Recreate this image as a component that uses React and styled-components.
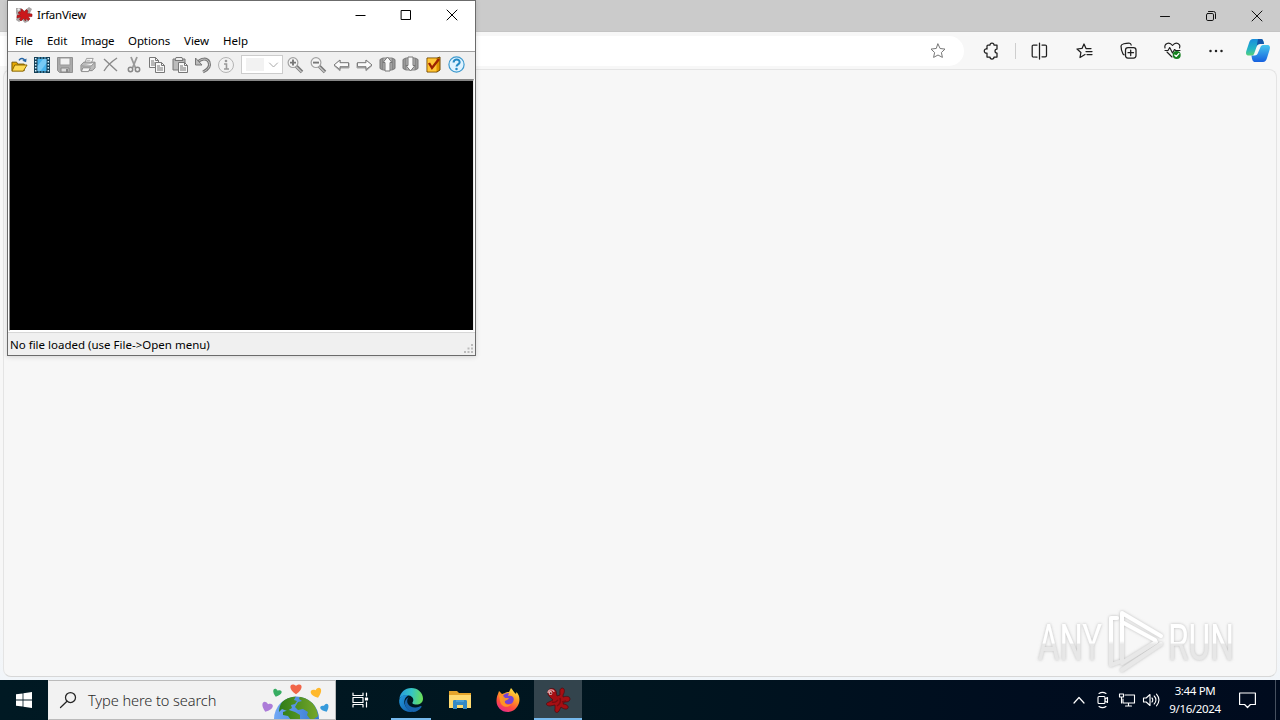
import React from "react";
import styled, { createGlobalStyle } from "styled-components";

const Global = createGlobalStyle`
  * { box-sizing: border-box; }
  body { margin: 0; overflow: hidden; font-family: "Noto Sans", "Open Sans", sans-serif; }
  svg { display: block; flex: none; overflow: visible; }
`;

const Desktop = styled.div`
  position: relative;
  width: 1280px;
  height: 720px;
  overflow: hidden;
  display: flex;
  flex-direction: column;
  background: #f7f7f7;
`;

/* ---------- browser ---------- */
const Browser = styled.div`
  flex: 1;
  min-height: 0;
  display: flex;
  flex-direction: column;
  padding-bottom: 3px;
  background: linear-gradient(#f7f7f7 90%, #f1f5f9);
`;
const BrowserTitle = styled.div`
  height: 32px;
  display: flex;
  justify-content: flex-end;
  background: #cbcbcb;
  border-bottom: 1px solid #c4c4c4;
`;
const CaptionButton = styled.div`
  width: 46px;
  display: flex;
  align-items: center;
  justify-content: center;
`;
const BrowserToolbar = styled.div`
  height: 37px;
  display: flex;
  align-items: center;
  background: #f7f7f7;
`;
const AddressBar = styled.div`
  width: 964px;
  height: 30px;
  margin-top: 1px;
  padding-right: 18px;
  display: flex;
  align-items: center;
  justify-content: flex-end;
  border-radius: 0 15px 15px 0;
  background: #fff;
`;
const ToolSlot = styled.div`
  width: ${(p) => p.$w}px;
  margin-left: ${(p) => p.$gap || 0}px;
  display: flex;
  justify-content: center;
`;
const Separator = styled.div`
  width: 1px;
  height: 16px;
  margin-left: 15px;
  background: #cecece;
`;
const PageCard = styled.div`
  flex: 1;
  margin: 0 3px;
  padding: 0 40px 1px 0;
  display: flex;
  justify-content: flex-end;
  align-items: flex-end;
  border: 1px solid #e4e4e4;
  border-bottom-color: #d7d7d7;
  border-radius: 8px;
  background: #f7f7f7;
`;

/* ---------- image viewer window ---------- */
const Window = styled.div`
  position: absolute;
  left: 7px;
  top: 0;
  width: 469px;
  height: 356px;
  display: flex;
  flex-direction: column;
  border: 1px solid #6b6b6b;
  background: #fff;
  color: #000;
  box-shadow: 0 1px 5px rgba(0, 0, 0, 0.14);
`;
const WindowTitle = styled.div`
  height: 29px;
  display: flex;
  align-items: center;
  padding: 0 0 1px 8px;
`;
const WindowName = styled.div`
  flex: 1;
  margin-left: 5px;
  font-size: 11.5px;
  line-height: 16px;
  letter-spacing: -0.25px;
`;
const MenuBar = styled.div`
  height: 21px;
  padding: 3px 0 0 7px;
  display: flex;
  font-size: 11.5px;
  line-height: 16px;
`;
const MenuItem = styled.div`
  width: ${(p) => p.$w}px;
  white-space: nowrap;
  letter-spacing: ${(p) => p.$track || 0}px;
`;
const IconBar = styled.div`
  height: 28px;
  display: flex;
  align-items: center;
  padding-bottom: 2px;
  border-top: 1px solid #a0a0a0;
  background: #f0f0f0;
`;
const IconCell = styled.div`
  width: 23px;
  padding-right: 1px;
  display: flex;
  justify-content: center;
`;
const Combo = styled.div`
  width: 42px;
  height: 19px;
  margin: 0 1px 0 3px;
  padding: 0 4px;
  display: flex;
  align-items: center;
  justify-content: space-between;
  border: 1px solid #ccc;
  background: #fff;
`;
const ComboValue = styled.div`
  width: 18px;
  height: 13px;
  background: #f2f2f2;
`;
const Canvas = styled.div`
  height: 252px;
  margin: 0 1px;
  border: 1px solid #868686;
  border-top-width: 2px;
  border-right-color: #e8e8e8;
  border-bottom-color: #fff;
  background: #000;
`;
const StatusBar = styled.div`
  flex: 1;
  margin-top: 1px;
  padding: 2px 1px 0 2px;
  display: flex;
  justify-content: space-between;
  align-items: flex-start;
  border-top: 1px solid #d7d7d7;
  background: #f0f0f0;
  font-size: 11.5px;
  line-height: 19px;
`;
const Grip = styled.div`
  align-self: flex-end;
  padding: 0 1px 2px 0;
`;

/* ---------- taskbar ---------- */
const Taskbar = styled.div`
  height: 40px;
  display: flex;
  background: linear-gradient(90deg, #001923, #00151f 50%, #000d1f 80%, #000b1e);
`;
const TaskButton = styled.div`
  width: ${(p) => p.$w || 49}px;
  height: 40px;
  display: flex;
  align-items: center;
  justify-content: center;
  background: ${(p) => (p.$active ? "#33444d" : "transparent")};
  box-shadow: ${(p) => (p.$active ? "inset 0 -2px #76b9ed" : "none")};
`;
const RunningTask = styled.div`
  width: 40px;
  height: 40px;
  display: flex;
  align-items: center;
  justify-content: center;
  border-bottom: 2px solid #76b9ed;
  padding-top: 2px;
`;
const SearchBox = styled.div`
  width: 288px;
  height: 40px;
  padding: 0 5px 0 11px;
  display: flex;
  align-items: center;
  border: 1px solid #bbb;
  border-left-color: #eee;
  background: #f2f2f2;
  color: #2b2b2b;
`;
const SearchText = styled.div`
  flex: 1;
  margin-left: 12px;
  font-size: 14.6px;
  letter-spacing: -0.1px;
  font-weight: 300;
  white-space: nowrap;
`;
const Tray = styled.div`
  margin-left: auto;
  display: flex;
  align-items: center;
  color: #fff;
`;
const TrayIcon = styled.div`
  width: 24px;
  display: flex;
  justify-content: center;
`;
const Clock = styled.div`
  width: 64px;
  margin-right: 8px;
  text-align: center;
  font-size: 11.5px;
  line-height: 18px;
  letter-spacing: -0.35px;
  padding-bottom: 1px;
`;
const ShowDesktop = styled.div`
  width: 5px;
  height: 40px;
  margin-left: 16px;
  border-left: 1px solid #46505f;
`;

const Line = ({ w = 16, h = w, vb = `0 0 ${w} ${h}`, c = "#222", s = 1, children }) => (
  <svg width={w} height={h} viewBox={vb} fill="none" stroke={c} strokeWidth={s} strokeLinecap="round" strokeLinejoin="round">
    {children}
  </svg>
);

const starPath = "M8 1 10.1 5.5 15 6.1 11.4 9.5 12.4 14.4 8 12 3.6 14.4 4.6 9.5 1 6.1 5.9 5.5Z";

const Splat = () => (
  <svg width="16" height="16" viewBox="0 0 16 16">
    <path d="M0 1h5l3 3 5-4 3 2-2 4 1 2-3 2 1 4-4 2-3-3-3 2-3-2 1-4-1-3Z" fill="#a9a5a5" />
    <path d="M5 2 7 3 8 5 10.500 2.500 12 4 11 6.500 16 7v2.500l-4 .3 2 2.200-2 1.500-2-2L9.500 14 7.500 11.500 5 14 3.500 12.500 5 10 1 11V8.500l3.500-1L2 6l1.500-1.500L5 5Z" fill="#cc171b" stroke="#91191b" strokeWidth=".6" strokeLinejoin="round" />
    <circle cx="2.700" cy="2.500" r="1.200" fill="#eee" />
  </svg>
);

const ViewerTaskIcon = () => (
  <svg width="26" height="26" viewBox="0 0 26 26">
    <path d="M3 5c0-4 6-5 8-1l1 5 3-1c0-3-1-6 2-7 3 0 3 4 1 7v2c3-1 7-1 7 2s-4 3-6 3l-1 2c3 0 6 2 5 4s-5 1-7-1l-2 4c-2 3-5 1-4-2v-4l-5 1c-4 0-5-3-1-4l4-2c-2-2-6-5-5-8Z" fill="#a50e13" stroke="#500d11" strokeWidth=".8" />
    <path d="M15 11c1 3 0 6-3 8M7 15c2 1 4 0 6-2m4 2 4-1" stroke="#790b10" strokeWidth="1.400" fill="none" />
    <path d="M3 6c0-4 6-4 6-1" fill="none" stroke="#df9b9e" strokeWidth="1.300" />
    <circle cx="5.500" cy="6" r="1.900" fill="#e9c5c4" />
    <circle cx="5.700" cy="6.200" r="1" fill="#74171a" />
  </svg>
);

const Page = ({ x, y }) => (
  <g transform={`translate(${x} ${y})`}>
    <path d="M.5.5h6l3 3v7h-9Z" fill="#f8f8f8" stroke="#777" />
    <path d="M6.500.5v3h3M2 4h3M2 6h6M2 8h6" fill="none" stroke="#777" />
  </g>
);
const Lens = ({ plus }) => (
  <svg width="16" height="16" viewBox="0 0 16 16">
    <path d="m9 9 6 6" stroke="#777" strokeWidth="3.600" />
    <path d="m9 9.500 5.500 5.500" stroke="#c4c4c4" strokeWidth="1.400" />
    <circle cx="6" cy="5.600" r="4.900" fill="#f5f5f5" stroke="#a2a2a2" strokeWidth="1.200" />
    <path d={plus ? "M3 5.600h6M6 2.600v6" : "M3 5.600h6"} stroke="#777" strokeWidth="1.900" />
  </svg>
);
const Arrow = ({ flip }) => (
  <svg width="17" height="16" viewBox="0 0 17 16">
    <g transform={flip ? "matrix(-1 0 0 1 17 0)" : undefined} strokeLinejoin="round">
      <path d="M1 8.500 7 3v3h9v5H7v3Z" fill="#aaa" stroke="#a2a2a2" />
      <path d="M1 8 7 3v2.700h8.500v4H7v2.800Z" fill="#fafafa" stroke="#7b7b7b" />
    </g>
  </svg>
);
const PageArrow = ({ down }) => (
  <svg width="17" height="17" viewBox="0 0 17 17">
    <path d="M1 3.500 4 2v12l-3-1.500Zm15 0L13 2v12l3-1.500Z" fill="#999" stroke="#777" />
    <path d="M4 2h9v12H4Z" fill="#bbb" stroke="#888" />
    <path d="M8.500 1 13 6.500h-2V15H6V6.500H4Z" transform={down ? "rotate(180 8.500 8)" : undefined} fill="#fafafa" stroke="#777" strokeLinejoin="round" />
  </svg>
);

const viewerIcons = [
  <svg width="17" height="16" viewBox="0 0 18 16">
    <path d="M1 14V5h5l1 2h7v7Z" fill="#e8a900" stroke="#765700" />
    <path d="M1 14.500 4 8h13l-4 6.500Z" fill="#ffdb53" stroke="#896500" />
    <path d="M8.500 3c2-3 5-2 6 0" fill="none" stroke="#2463a3" strokeWidth="1.500" /><path d="m16.500 1-.5 4-4-1.500Z" fill="#2463a3" />
  </svg>,
  <svg width="16" height="16" viewBox="0 0 16 16">
    <rect width="16" height="16" fill="#143e56" /><rect x="3.500" y="2" width="9" height="12" fill="#48b4ed" />
    <path d="M3.500 9 9 2h3.500v4l-6 8h-3Z" fill="#90d4f8" opacity=".65" />
    <path d="M1.700 1v14M14.300 1v14" stroke="#d5f3ff" strokeWidth="1.500" strokeDasharray="1.5 1.5" />
    <path d="M4 1h9M4 15h9" stroke="#65b6dc" strokeDasharray="2 1" />
  </svg>,
  <svg width="16" height="16" viewBox="0 0 16 16"><path d="M.5.5h15v15h-13l-2-2Z" fill="#aaa" stroke="#929292" /><path d="M3 1h10v7H3z" fill="#f2f2f2" stroke="#999" /><path d="M4 11h8v4H4z" fill="#ddd" stroke="#888" /><path d="M9 12h2v3H9z" fill="#888" /></svg>,
  <svg width="16" height="16" viewBox="0 0 17 16"><path d="m5 6 2-5h7l-2 5" fill="#fff" stroke="#999" /><path d="m1 8 3-3h12v6l-3 3H1Z" fill="#bbb" stroke="#888" /><path d="M2 9h10l3-3M3 11h8l-2 4H1.500Z" fill="#f4f4f4" stroke="#888" /><path d="M7 3h4M6 5h4" stroke="#aaa" /></svg>,
  <svg width="16" height="16" viewBox="0 0 16 16"><path d="m1 2 13 12M14 1C8 5 4 9 1 14" fill="none" stroke="#8a8a8a" strokeWidth="1.400" /></svg>,
  <svg width="16" height="16" viewBox="0 0 16 16"><path d="m5 0 4.500 11M11 0 6.500 11" stroke="#999" strokeWidth="1.800" /><circle cx="4.500" cy="12.500" r="2.200" fill="#eee" stroke="#888" strokeWidth="1.500" /><circle cx="11.500" cy="12.500" r="2.200" fill="#eee" stroke="#888" strokeWidth="1.500" /></svg>,
  <svg width="16" height="16" viewBox="0 0 16 16"><Page x="0" y="0" /><Page x="6" y="5" /></svg>,
  <svg width="16" height="16" viewBox="0 0 16 16"><path d="M1 2h12v11H1Z" fill="#bbb" stroke="#777" /><path d="M4 .5h6l1 3H3Z" fill="#eee" stroke="#777" /><Page x="6" y="5" /></svg>,
  <svg width="16" height="16" viewBox="0 0 16 16"><path d="M2 6c4-5 10-5 12-1 2 5-2 8-6 10" fill="none" stroke="#777" strokeWidth="3" /><path d="M2 6c4-5 10-5 12-1 2 5-2 8-6 10" fill="none" stroke="#c4c4c4" /><path d="M.5 1v7H7Z" fill="#bbb" stroke="#777" /></svg>,
  <svg width="16" height="16" viewBox="0 0 16 16"><circle cx="8" cy="8" r="7.500" fill="#f2f2f2" stroke="#b4b4b4" /><circle cx="8" cy="4" r="1.300" fill="#999" /><path d="M6 7h2.500v5M6 12h5" fill="none" stroke="#999" strokeWidth="1.600" /></svg>,
];
const navIcons = [
  <Lens plus />, <Lens />, <Arrow />, <Arrow flip />, <PageArrow />, <PageArrow down />,
  <svg width="15" height="17" viewBox="0 0 15 17"><path d="M1 2h10l3-1v13l-3 2H1Z" fill="#df9300" stroke="#704800" /><path d="M1.500 2.500h9v13h-9Z" fill="#ffc637" /><path d="m3 7 3 5 7-9" fill="none" stroke="#9e2300" strokeWidth="2.400" /></svg>,
  <svg width="17" height="17" viewBox="0 0 17 17"><circle cx="8.500" cy="8.500" r="7.600" fill="#dff3ff" stroke="#3d99cd" strokeWidth="1.200" /><path d="M5.600 6.500c0-4 6.400-4 6 0-.2 2-3 2-3 4" fill="none" stroke="#248ac5" strokeWidth="2.100" /><circle cx="8.500" cy="13" r="1.250" fill="#248ac5" /></svg>,
];

const Watermark = () => (
  <svg width="200" height="66" viewBox="1036 608 200 66" fontFamily="Roboto, sans-serif">
    <defs>
      <linearGradient id="ink" x1="0" y1="0" x2="0" y2="1"><stop offset=".5" stopColor="#fff" /><stop offset=".52" stopColor="#e7e7e7" /></linearGradient>
      <linearGradient id="mark" gradientUnits="userSpaceOnUse" x1="0" y1="608" x2="0" y2="672"><stop offset=".5" stopColor="#fff" /><stop offset=".55" stopColor="#e8e8e8" /></linearGradient>
      <filter id="soft" x="-10%" y="-20%" width="120%" height="140%"><feDropShadow dx="0" dy="0" stdDeviation="1.4" floodColor="#999" floodOpacity=".65" /></filter>
    </defs>
    <g filter="url(#soft)">
      <text x="1038" y="659" fontSize="50" fill="url(#ink)" textLength="64" lengthAdjust="spacingAndGlyphs">ANY</text>
      <text x="1168" y="659" fontSize="50" fill="url(#ink)" textLength="66" lengthAdjust="spacingAndGlyphs">RUN</text>
      <g fill="none" stroke="url(#mark)" strokeWidth="4" strokeLinejoin="round" strokeLinecap="round">
        <path d="M1117 617h-6v47l8-3M1122 662v-50l39 23M1122 621l33 18M1122 662l34-21M1122 669l39-26" />
      </g>
    </g>
  </svg>
);

const heart = "M0 5C-9-1-5-7 0-3 5-7 9-1 0 5Z";
const Earth = () => (
  <svg width="70" height="38" viewBox="260 681 70 38">
    <defs>
      <linearGradient id="sea"><stop stopColor="#83b7ff" /><stop offset="1" stopColor="#286ec8" /></linearGradient>
      <linearGradient id="land"><stop stopColor="#2e7c17" /><stop offset="1" stopColor="#76a72b" /></linearGradient>
      <clipPath id="globe"><path d="M274 719a22.500 22.500 0 0 1 45 0Z" /></clipPath>
    </defs>
    <g clipPath="url(#globe)">
      <path d="M260 681h70v38h-70z" fill="url(#sea)" />
      <path d="M282 702c4-5 10-6 14-6l-2 4 3 1-2 3-4 1 1 3-5 3-5-2-3 3c0-4 1-7 3-10ZM300 696c10 1 17 10 18 20l-4 3h-4l-3-4 1-3-5-3-5 1-3-3 3-5 4-1-3-2ZM283 712l6-2 6 2 5 3v5h-9l-3-4-5-1Z" fill="url(#land)" />
    </g>
    <path d={heart} transform="translate(296 689) scale(1.050)" fill="#f16548" />
    <path d={heart} transform="translate(277 693) rotate(18) scale(.8)" fill="#37ad62" />
    <path d={heart} transform="translate(316.500 693) rotate(-18)" fill="#ffb92c" />
    <path d={heart} transform="translate(267 707) rotate(20)" fill="#ac7cd8" />
    <path d={heart} transform="translate(325 708) rotate(-25) scale(.8)" fill="#369adb" />
  </svg>
);

const Edge = () => (
  <svg width="24" height="24" viewBox="0 0 24 24">
    <defs>
      <linearGradient id="edgeTop" x1="0" y1=".4" x2="1" y2=".5"><stop stopColor="#279cde" /><stop offset=".5" stopColor="#35c5c5" /><stop offset="1" stopColor="#6be055" /></linearGradient>
      <linearGradient id="edgeLow" x1="0" y1="0" x2="1" y2="1"><stop stopColor="#229ade" /><stop offset="1" stopColor="#125ba9" /></linearGradient>
    </defs>
    <path d="M.4 11C1 4.500 6 0 12.300 0 19 0 24 5 24 10.500c0 4-3 6-6.500 6-4 0-4.700-1.500-3.600-2.800 1.300-2-.2-5.600-4-6.200C5.500 6.500 1.500 8.500.4 11Z" fill="url(#edgeTop)" />
    <path d="M.2 12C1 8 5 6 9.500 7.300c-4 2-5.500 7-2.800 11.200 1.800 2.900 4.300 4.500 7 5.300C6 25.200-.5 19.500.2 12Z" fill="url(#edgeLow)" />
    <path d="M9.700 9c-4 5 .5 11 7 10.500 2-.2 3.500-.8 5-1.500 1 0 1.200.5.5 1.500-2.500 3.500-6 4.900-9.600 4.300C5 21 3.500 12 9.700 9Z" fill="#1764ad" />
  </svg>
);
const Explorer = () => (
  <svg width="22" height="20" viewBox="0 0 22 20"><path d="M0 1h8l2 2h12v15H0Z" fill="#e5a52b" /><path d="M0 5h22v13H0Z" fill="#ffda70" /><path d="M4 11c0-1 1-1 2-1h10c1 0 2 0 2 1v8h-4v-4H8v4H4Z" fill="#3689c4" /><path d="M7 11h8" stroke="#62b6e8" /></svg>
);
const Firefox = () => (
  <svg width="24" height="24" viewBox="0 0 24 24">
    <defs><linearGradient id="fox" x1=".8" y1="0" x2=".3" y2="1"><stop stopColor="#ffe847" /><stop offset=".4" stopColor="#ff9a24" /><stop offset=".72" stopColor="#ff4b3e" /><stop offset="1" stopColor="#e52b8b" /></linearGradient></defs>
    <path d="M2 6 3 3l3 3 3-1c1-1 2-1 4-1l2-4c2 2 2.500 4 5 6l.5-2c3 3 3.500 7 2.500 11-1.500 5-6 9-11 9C5 24 .5 19 .5 13 .5 10 1 8 2 6Z" fill="url(#fox)" />
    <path d="M7 8c1-2 3-3 6-3l-1 3c5-1 7 2 5 6-2 3-6 3-9 0-2-2-2-4-1-6Z" fill="#7542d6" />
    <path d="M3 7c3 0 5 1 6 3h4c-1 2-3 2-4 3-1 3 3 5 6 3-3 5-10 3-11-3" fill="#ff9b20" opacity=".9" />
  </svg>
);

export default function App() {
  return (
    <>
      <Global />
      <Desktop>
        <Browser>
          <BrowserTitle>
            <CaptionButton><Line w={10} c="#111"><path d="M.5 5.500h9" /></Line></CaptionButton>
            <CaptionButton><Line w={10} c="#111"><rect x=".5" y="2.500" width="7" height="7" rx="1.300" /><path d="M2.500.5h5a2 2 0 0 1 2 2v5" /></Line></CaptionButton>
            <CaptionButton><Line w={10} c="#111"><path d="m0 0 10 10M10 0 0 10" /></Line></CaptionButton>
          </BrowserTitle>
          <BrowserToolbar>
            <AddressBar><Line c="#777"><path d={starPath} /></Line></AddressBar>
            <ToolSlot $w={16} $gap={20}>
              <Line c="#1f1f1f" s={1.25}><path d="M4 2h2a2 2 0 0 1 4 0h3v4a2 2 0 1 0 0 4v4h-3a2 2 0 0 1-4 0H3v-4a2.100 2.100 0 1 1 0-4V3a1 1 0 0 1 1-1Z" /></Line>
            </ToolSlot>
            <Separator />
            <ToolSlot $w={16} $gap={15}>
              <Line c="#1f1f1f" s={1.25}><path d="M8.500 0v16M6 2H2.500a1.300 1.300 0 0 0-1.300 1.300v9.200A1.300 1.300 0 0 0 2.500 14H6M11 2h3.200a1.300 1.300 0 0 1 1.300 1.300v9.200a1.300 1.300 0 0 1-1.300 1.300H11" /></Line>
            </ToolSlot>
            <ToolSlot $w={16} $gap={29}>
              <Line c="#1f1f1f" s={1.25}><path d="m9 11.500-5 3 .9-5L1 6l5-.6L8 1l2 4.500h5M10 8.500h6M11 11.500h5" /></Line>
            </ToolSlot>
            <ToolSlot $w={17} $gap={28}>
              <Line w={17} c="#1f1f1f" s={1.25}><rect x="5.500" y="5.500" width="10.500" height="10.500" rx="2.500" /><path d="M8 10.700h5.500M10.700 8v5.500M4 12.800l-1-.8C2 10 1 5 1 4c0-2 5-3 8-3 1 0 2 .5 2.200 2" /></Line>
            </ToolSlot>
            <ToolSlot $w={17} $gap={27}>
              <Line w={17} c="#1f1f1f" s={1.15}><path d="M1 6C0 2 5-1 8.500 3.500 12-1 17 2 15.500 6M1 8.500h3l1.700-3L8.500 11l2-3.500 1.200 1H16M3 10l5 5" /><circle cx="12.700" cy="13" r="4" fill="#15801f" stroke="none" /><path d="m10.700 13 1.500 1.500 2.700-3" stroke="#fff" /></Line>
            </ToolSlot>
            <ToolSlot $w={16} $gap={27}>
              <svg width="16" height="16" viewBox="0 0 16 16"><g fill="#222"><circle cx="2.500" cy="8" r="1.250" /><circle cx="8" cy="8" r="1.250" /><circle cx="13.500" cy="8" r="1.250" /></g></svg>
            </ToolSlot>
            <ToolSlot $w={24} $gap={22}>
              <svg width="24" height="23" viewBox="0 0 24 23">
                <defs><linearGradient id="cpA" x1=".3" y1="0" x2=".4" y2="1"><stop stopColor="#188dde" /><stop offset=".6" stopColor="#24b5c4" /><stop offset="1" stopColor="#59d275" /></linearGradient><linearGradient id="cpB" x2="0" y2="1"><stop stopColor="#46c6ed" /><stop offset="1" stopColor="#1660df" /></linearGradient></defs>
                <path d="M7 0h8c2 0 2.500 2 3 5h-4c-2 0-3 1-3.500 3L8 15c-.6 1-1.500 1.500-3 1.500H3c-3 0-3.500-2-2.500-5L3 4c.8-2.500 2-4 4-4Z" fill="url(#cpA)" />
                <path d="M12 0h3c2 0 2.500 2 3 5h-4c-2 0-3 1-3.500 3Z" fill="#1456a8" />
                <path d="M18 6h3c3 0 3.500 2 2.500 5L21 19c-.8 2.500-2 4-4 4H9c-2 0-3-2-3.500-6.500h3c2 0 3-1 3.600-3L14.500 8c.6-1.500 1.600-2 3.500-2Z" fill="url(#cpB)" />
              </svg>
            </ToolSlot>
          </BrowserToolbar>
          <PageCard><Watermark /></PageCard>
        </Browser>

        <Taskbar>
          <TaskButton $w={48}>
            <svg width="16" height="16" viewBox="0 0 16 16"><path d="M0 2.300 6.600 1.400v6.200H0ZM7.400 1.300 16 0v7.600H7.400ZM0 8.400h6.600v6.200L0 13.700ZM7.400 8.400H16V16l-8.600-1.200Z" fill="#fff" /></svg>
          </TaskButton>
          <SearchBox>
            <Line w={16} c="#252525" s={1.25}><circle cx="10.500" cy="5.500" r="5" /><path d="M7 9.300.5 15.500" /></Line>
            <SearchText>Type here to search</SearchText>
            <Earth />
          </SearchBox>
          <TaskButton $w={48}>
            <Line w={17} h={16} c="#fff" s={1.2}><path d="M1 1v2.500h10V1M1 15v-2.500h10V15M1 5.500h10v5H1ZM14.500 1v3M14.500 10v5" /><path d="M13.500 6h2v2h-2Z" fill="#fff" /></Line>
          </TaskButton>
          <TaskButton $w={54}><RunningTask><Edge /></RunningTask></TaskButton>
          <TaskButton $w={44}><Explorer /></TaskButton>
          <TaskButton $w={52}><Firefox /></TaskButton>
          <TaskButton $w={48} $active><ViewerTaskIcon /></TaskButton>
          <Tray>
            <TrayIcon><Line w={12} h={8} c="#fff" s={1.2}><path d="m1 7 5-5.500L11 7" /></Line></TrayIcon>
            <TrayIcon><Line w={14} h={16} c="#fff" s={1.1}><rect x="2" y="4.500" width="7" height="7" rx="1" /><path d="m9 7 2.500-1.500v5L9 9M3 1.500c2-1.300 5-1.300 7 0M3 14.500c2 1.300 5 1.300 7 0" /></Line></TrayIcon>
            <TrayIcon><Line w={16} h={14} c="#fff" s={1.1}><path d="M6 2h9.500v8H4V6M9.500 10v3M6.500 13h6M.5 1h4v3h-4ZM2.500 4v6" /></Line></TrayIcon>
            <TrayIcon><Line w={16} h={14} c="#fff" s={1.1}><path d="M.5 5h2.700L7 1.500v11L3.200 9H.5ZM9 5c1 1 1 3 0 4M11.200 3c2.300 2.300 2.300 5.700 0 8M13.500 1.200c3 3.500 3 8 0 11.600" /></Line></TrayIcon>
            <Clock>3:44 PM<br />9/16/2024</Clock>
            <TrayIcon><Line w={17} h={16} c="#fff" s={1.2}><path d="M.6 1h15.800v11.500h-5L8.500 15.500l-2.900-3h-5Z" /></Line></TrayIcon>
            <ShowDesktop />
          </Tray>
        </Taskbar>

        <Window>
          <WindowTitle>
            <Splat />
            <WindowName>IrfanView</WindowName>
            <CaptionButton><Line w={10} c="#000"><path d="M.5 5.500h10" strokeLinecap="butt" /></Line></CaptionButton>
            <CaptionButton><Line w={10} c="#000"><rect x=".5" y=".5" width="9" height="9" /></Line></CaptionButton>
            <CaptionButton><Line w={10} c="#000"><path d="m0 0 10 10M10 0 0 10" /></Line></CaptionButton>
          </WindowTitle>
          <MenuBar>
            <MenuItem $w={32} $track={-0.1}>File</MenuItem>
            <MenuItem $w={34} $track={-0.1}>Edit</MenuItem>
            <MenuItem $w={47} $track={-0.3}>Image</MenuItem>
            <MenuItem $w={56} $track={-0.1}>Options</MenuItem>
            <MenuItem $w={39}>View</MenuItem>
            <MenuItem $w={40}>Help</MenuItem>
          </MenuBar>
          <IconBar>
            {viewerIcons.map((icon, i) => <IconCell key={i}>{icon}</IconCell>)}
            <Combo><ComboValue /><Line w={9} h={6} c="#aaa"><path d="m.5 1 4 4 4-4" /></Line></Combo>
            {navIcons.map((icon, i) => <IconCell key={i}>{icon}</IconCell>)}
          </IconBar>
          <Canvas />
          <StatusBar>
            No file loaded (use File-&gt;Open menu)
            <Grip><svg width="9" height="9" viewBox="0 0 9 9"><path d="M7 0h2v2H7zM3.500 3.500h2v2h-2zM7 3.500h2v2H7zM0 7h2v2H0zM3.500 7h2v2h-2zM7 7h2v2H7z" fill="#bbb" /></svg></Grip>
          </StatusBar>
        </Window>
      </Desktop>
    </>
  );
}
